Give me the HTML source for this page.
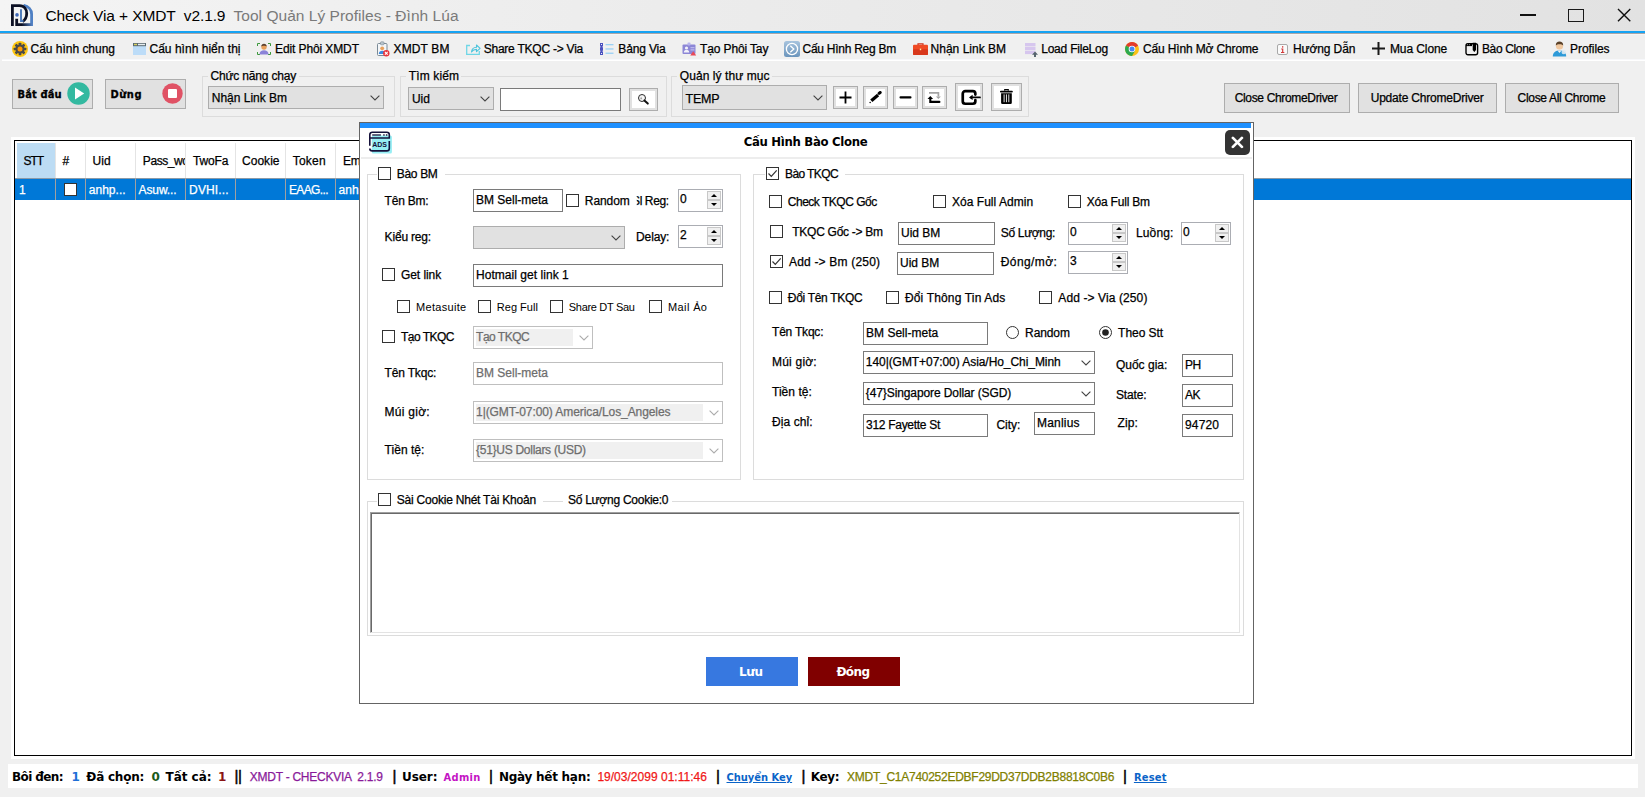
<!DOCTYPE html>
<html lang="vi"><head><meta charset="utf-8"><title>Check Via + XMDT</title>
<style>
html,body{margin:0;padding:0}
body{width:1645px;height:797px;position:relative;overflow:hidden;background:#f0f0f0;font-family:"Liberation Sans",sans-serif;font-size:12px;color:#000}
div,span.t,svg{position:absolute;box-sizing:border-box}
.t{white-space:pre;line-height:16px;-webkit-text-stroke:0.25px}
.btn{background:#e1e1e1;border:1px solid #adadad}
.gb{border:1px solid #dcdcdc}
.in{background:#fff;border:1px solid #7a7a7a}
.cb{background:#fff;border:1px solid #333;width:13px;height:13px}
.cmb{background:#e1e1e1;border:1px solid #adadad}
</style></head>
<body>
<div style="left:0px;top:0px;width:1645px;height:31px;background:linear-gradient(90deg,#f4f4f4 0%,#ececec 40%,#e2e2e2 100%);"></div>
<div style="left:0px;top:31px;width:1645px;height:2px;background:#16a3f3;"></div>
<div style="left:0px;top:33px;width:1645px;height:1px;background:#aca6a6;"></div>
<div style="left:0px;top:34px;width:1645px;height:1px;background:#f6f6f6;"></div>
<svg style="left:11px;top:4px" width="22" height="22" viewBox="0 0 22 22"><defs><linearGradient id="lg" x1="0" x2="1" y1="0" y2="0"><stop offset="0" stop-color="#0c1024"/><stop offset=".3" stop-color="#0c1024"/><stop offset="1" stop-color="#5b8bd0"/></linearGradient></defs><path d="M12.500 1.300C17.500 2.200 20.600 5.800 20.600 10V22" stroke="#4f80c4" stroke-width="2.800" fill="none"/><path d="M5.700 14.700V20.600H22" stroke="url(#lg)" stroke-width="2.800" fill="none"/><path d="M1.400 22V1.600H8.500C13.500 1.600 15.700 5.500 15.700 9.500 15.700 13 14 16 11.500 17.600" stroke="#0c1024" stroke-width="2.800" fill="none"/><path d="M10 5.300V17H12.500" stroke="#4a78b8" stroke-width="1.900" fill="none"/><circle cx="6" cy="10.900" r="1.800" fill="#3f68b8"/></svg>
<span class="t" style="letter-spacing:-0.109px;line-height:19px;left:45.5px;top:6px;font-size:15.5px;-webkit-text-stroke:0;">Check Via + XMDT  v2.1.9</span>
<span class="t" style="letter-spacing:0.032px;line-height:19px;left:233.5px;top:6px;font-size:15.5px;color:#7a7a7a;-webkit-text-stroke:0;">Tool Quản Lý Profiles - Đình Lúa</span>
<div style="left:1520px;top:14px;width:16px;height:2px;background:#111;"></div>
<div style="left:1568px;top:8.5px;width:16px;height:13.5px;border:1.800px solid #1a1a1a;"></div>
<svg style="left:1617px;top:8px" width="14" height="14" viewBox="0 0 14 14"><path d="M1 1L13.300 13.200M13.300 1L1 13.200" stroke="#111" stroke-width="1.400" fill="none"/></svg>
<div style="left:2px;top:59px;width:1643px;height:1px;background:#f7f8fb;"></div>
<div style="left:2px;top:60px;width:1643px;height:1px;background:#fff;"></div>
<span class="t" style="letter-spacing:-0.018px;left:30.5px;top:41px;">Cấu hình chung</span>
<span class="t" style="letter-spacing:0.017px;left:149.5px;top:41px;">Cấu hình hiển thị</span>
<span class="t" style="letter-spacing:-0.105px;left:275.0px;top:41px;">Edit Phôi XMDT</span>
<span class="t" style="letter-spacing:0.146px;left:393.5px;top:41px;">XMDT BM</span>
<span class="t" style="letter-spacing:-0.230px;left:483.7px;top:41px;">Share TKQC -&gt; Via</span>
<span class="t" style="letter-spacing:-0.143px;left:618.3px;top:41px;">Bảng Via</span>
<span class="t" style="letter-spacing:-0.139px;left:700.1px;top:41px;">Tạo Phôi Tay</span>
<span class="t" style="letter-spacing:-0.264px;left:802.5px;top:41px;">Cấu Hình Reg Bm</span>
<span class="t" style="letter-spacing:0.002px;left:930.6px;top:41px;">Nhận Link BM</span>
<span class="t" style="letter-spacing:-0.217px;left:1041.2px;top:41px;">Load FileLog</span>
<span class="t" style="letter-spacing:-0.137px;left:1142.9px;top:41px;">Cấu Hình Mở Chrome</span>
<span class="t" style="letter-spacing:-0.096px;left:1292.9px;top:41px;">Hướng Dẫn</span>
<span class="t" style="letter-spacing:-0.079px;left:1389.9px;top:41px;">Mua Clone</span>
<span class="t" style="letter-spacing:-0.343px;left:1481.9px;top:41px;">Bào Clone</span>
<span class="t" style="letter-spacing:-0.074px;left:1570.1px;top:41px;">Profiles</span>
<svg style="left:12px;top:41px" width="16" height="16" viewBox="0 0 16 16"><circle cx="8" cy="8" r="8" fill="#fdc50f"/><g fill="#4a4a4a"><circle cx="8" cy="8" r="4.600"/><g id="gt"><rect x="6.700" y="1.700" width="2.600" height="12.600" rx=".6"/><rect x="6.700" y="1.700" width="2.600" height="12.600" rx=".6" transform="rotate(45 8 8)"/><rect x="6.700" y="1.700" width="2.600" height="12.600" rx=".6" transform="rotate(90 8 8)"/><rect x="6.700" y="1.700" width="2.600" height="12.600" rx=".6" transform="rotate(135 8 8)"/></g></g><circle cx="8" cy="8" r="2.500" fill="#ff9a00"/></svg>
<svg style="left:133px;top:43px" width="13" height="12" viewBox="0 0 13 12"><rect width="13" height="12" fill="#bcdcf8"/><rect width="13" height="3.200" fill="#5a6a72"/><rect x="1" y=".8" width="3" height="1.400" fill="#d8d060"/><rect x="5" y=".8" width="7" height="1.400" fill="#e8eef0"/></svg>
<svg style="left:257px;top:43px" width="14" height="12" viewBox="0 0 14 12"><path d="M.5 3V.5H3M11 .5h2.500V3M13.500 9v2.500H11M3 11.500H.5V9" fill="none" stroke="#3c9a3c" stroke-width="1"/><circle cx="7" cy="4" r="2.700" fill="#e9a05c"/><path d="M4.300 3.500c0-2 1.200-2.800 2.700-2.800s2.700.8 2.700 2.800c-1 -.9-4.400-.9-5.400 0z" fill="#5a4030"/><path d="M2.500 11.500c0-3 2-4.200 4.500-4.200s4.500 1.200 4.500 4.200z" fill="#8a82d8"/></svg>
<svg style="left:376px;top:41px" width="14" height="16" viewBox="0 0 14 16"><rect x="1.500" y="2.500" width="9.500" height="12" rx="1" fill="#f4f6f8" stroke="#7a8a96" stroke-width="1"/><rect x="4.500" y=".8" width="3.500" height="3" rx=".8" fill="#b8c4cc" stroke="#7a8a96" stroke-width=".6"/><circle cx="6.200" cy="7.300" r="1.900" fill="#e9a05c"/><path d="M2.800 13c0-2.400 1.500-3.300 3.400-3.300s3.400.9 3.400 3.300z" fill="#3a8ae0"/><circle cx="10.300" cy="12.300" r="3.200" fill="#e8323c"/><path d="M8.900 10.900l2.800 2.800M11.700 10.900l-2.800 2.800" stroke="#fff" stroke-width="1.100"/></svg>
<svg style="left:466px;top:43px" width="15" height="12" viewBox="0 0 15 12"><path d="M4 2.500H.7v9h12.600V8" fill="none" stroke="#6fd6e6" stroke-width="1.300"/><path d="M5.500 9c.3-3 2-4.600 5-4.700V2l3.600 3.300-3.600 3.300V6.400c-2.200 0-3.700.7-5 2.600z" fill="none" stroke="#4cc4dc" stroke-width="1.100" stroke-linejoin="round"/></svg>
<svg style="left:600px;top:43px" width="14" height="12" viewBox="0 0 14 12"><g fill="none" stroke="#4a50c0" stroke-width="1"><rect x=".5" y=".5" width="2" height="2.600"/><rect x=".5" y="4.700" width="2" height="2.600"/><rect x=".5" y="8.900" width="2" height="2.600"/></g><rect x="1" y="3" width="1" height="2" fill="#4a50c0"/><rect x="1" y="7.200" width="1" height="2" fill="#4a50c0"/><g fill="#9ad0f4"><rect x="5.500" y="1" width="8" height="1.300"/><rect x="5.500" y="5.300" width="8" height="1.300"/><rect x="5.500" y="9.600" width="8" height="1.300"/></g></svg>
<svg style="left:682px;top:42px" width="15" height="14" viewBox="0 0 15 14"><rect x=".5" y="2.500" width="13" height="9.500" rx="1" fill="#8c86d6"/><rect x="5.500" y=".6" width="3" height="3" rx=".8" fill="#b8b4ec"/><circle cx="4.500" cy="6" r="1.600" fill="#f2f2fa"/><path d="M1.800 10.500c0-1.800 1.200-2.400 2.700-2.400s2.700.6 2.700 2.400z" fill="#f2f2fa"/><rect x="8.500" y="5.200" width="4" height="1" fill="#c8c4f2"/><rect x="8.500" y="7.400" width="4" height="1" fill="#c8c4f2"/><path d="M11.200 9.200l3 4.300h-6z" fill="#e84858"/></svg>
<svg style="left:784px;top:41px" width="16" height="16" viewBox="0 0 16 16"><defs><linearGradient id="rg" x1="0" y1="0" x2="0" y2="1"><stop offset="0" stop-color="#a8c4de"/><stop offset="1" stop-color="#6a94bc"/></linearGradient></defs><rect width="16" height="16" rx="2.500" fill="url(#rg)"/><circle cx="8" cy="8" r="5.600" fill="none" stroke="#fff" stroke-width="1.300"/><path d="M6.300 4.800L9.800 8l-3.500 3.200" fill="none" stroke="#fff" stroke-width="1.300"/></svg>
<svg style="left:913px;top:43px" width="15" height="12" viewBox="0 0 15 12"><path d="M5 2V.8h5V2" fill="none" stroke="#d0301a" stroke-width="1.200"/><rect y="1.800" width="15" height="10.200" rx="1" fill="#f04a24"/><rect y="6.300" width="15" height="5.700" rx="1" fill="#d8381c"/><rect x="6.800" y="5.600" width="1.400" height="1.600" fill="#ffe9a0"/></svg>
<svg style="left:1025px;top:43px" width="13" height="14" viewBox="0 0 13 14"><g fill="#d6c6ee"><rect width="10.500" height="3.300"/><rect y="3.900" width="10.500" height="3.300"/><rect y="7.800" width="10.500" height="3.300"/></g><path d="M10 8.600l3 3.200h-2V14H9v-2.200H7z" fill="#56646e"/></svg>
<svg style="left:1125px;top:42px" width="14" height="14" viewBox="0 0 14 14"><circle cx="7" cy="7" r="7" fill="#fbc116"/><path d="M7 7L.94 3.500A7 7 0 0 1 13.060 3.500z" fill="#e33b2e"/><path d="M7 7L.94 3.500A7 7 0 0 0 7 14l3.030-5.250z" fill="#2da94f"/><path d="M7 7h6.800" stroke="#fbc116" stroke-width="0"/><path d="M13.060 3.500H7v3.500z" fill="#e33b2e"/><circle cx="7" cy="7" r="3.300" fill="#fff"/><circle cx="7" cy="7" r="2.500" fill="#4688f4"/></svg>
<svg style="left:1277px;top:44px" width="11" height="11" viewBox="0 0 11 11"><rect x=".5" y=".5" width="10" height="10" rx="1.500" fill="#fafafa" stroke="#a8a8a8" stroke-width="1"/><rect x="5" y="2.200" width="1.300" height="1.400" fill="#d23838"/><path d="M4.200 4.600h2.100v3.300h1v1h-3.300v-1h1.100v-2.300h-.9z" fill="#d23838"/></svg>
<svg style="left:1372px;top:42px" width="13" height="13" viewBox="0 0 13 13"><path d="M6.500 0v13M0 6.500h13" stroke="#1a1a1a" stroke-width="2"/></svg>
<svg style="left:1464.500px;top:41.500px" width="14" height="14" viewBox="0 0 14 14"><rect x="1" y="1.800" width="11.600" height="11" rx="2" fill="none" stroke="#000" stroke-width="1.400"/><rect x="1" y="1.800" width="6" height="2.300" fill="#000"/><circle cx="2.400" cy="2.800" r=".45" fill="#fff"/><circle cx="4.300" cy="2.800" r=".45" fill="#fff"/><path d="M7.700 .8h3.300v7.300l-1.650 2-1.650-2z" fill="#000"/></svg>
<svg style="left:1552px;top:41px" width="16" height="16" viewBox="0 0 16 16"><circle cx="7.500" cy="5" r="3.600" fill="#f0c8a0"/><path d="M3.800 4.400C3.600 1.600 5.400.4 7.500.4s3.900 1.200 3.700 4c-1.400-1.600-6-1.600-7.400 0z" fill="#5a4028"/><path d="M.8 15.500c0-4.300 3-6 6.700-6s6.700 1.700 6.700 6z" fill="#2e9ad8"/><path d="M5.500 9.600l2 2.400 2-2.400z" fill="#f4f4f4"/><circle cx="11.800" cy="11" r="2.300" fill="#dfeaf2" opacity=".9"/></svg>
<div class="btn" style="left:12px;top:79px;width:81px;height:30px;"></div>
<span class="t" style="letter-spacing:0.133px;font-family:'DejaVu Sans Condensed', 'Liberation Sans', sans-serif;line-height:15px;left:17.5px;top:87px;font-size:11px;font-weight:700;-webkit-text-stroke:0.3px;">Bắt đầu</span>
<svg style="left:67px;top:82px" width="23" height="23" viewBox="0 0 23 23"><circle cx="11.500" cy="11.500" r="11.200" fill="#33b9a0"/><path d="M8 5.500L17.200 11.500 8 17.500z" fill="#fff"/></svg>
<div class="btn" style="left:105px;top:79px;width:81px;height:30px;"></div>
<span class="t" style="letter-spacing:0.531px;font-family:'DejaVu Sans Condensed', 'Liberation Sans', sans-serif;line-height:15px;left:110.5px;top:87px;font-size:11px;font-weight:700;-webkit-text-stroke:0.3px;">Dừng</span>
<svg style="left:162px;top:83px" width="21" height="21" viewBox="0 0 21 21"><circle cx="10.500" cy="10.500" r="10.200" fill="#e05265"/><rect x="6" y="6" width="9" height="9" rx="1" fill="#fff"/></svg>
<div style="left:202px;top:76px;width:193px;height:41px;border:1px solid #dcdcdc;"></div>
<div style="left:208px;top:75px;width:90.7px;height:3px;background:#f0f0f0;"></div>
<span class="t" style="letter-spacing:-0.184px;left:210.5px;top:68px;">Chức năng chạy</span>
<div class="cmb" style="left:208px;top:86px;width:176px;height:23px;"></div>
<span class="t" style="letter-spacing:-0.007px;left:211.8px;top:90px;">Nhận Link Bm</span>
<svg style="left:369.6px;top:95px" width="10" height="6" viewBox="0 0 10 6"><path d="M.6 .6L5 5 9.400 .6" fill="none" stroke="#444" stroke-width="1.100"/></svg>
<div style="left:400px;top:76px;width:267px;height:41px;border:1px solid #dcdcdc;"></div>
<div style="left:406.3px;top:75px;width:55.2px;height:3px;background:#f0f0f0;"></div>
<span class="t" style="letter-spacing:0.122px;left:408.8px;top:68px;">Tìm kiếm</span>
<div class="cmb" style="left:408px;top:87px;width:86px;height:23px;"></div>
<span class="t" style="letter-spacing:-0.008px;left:411.9px;top:91px;">Uid</span>
<svg style="left:479.5px;top:96px" width="10" height="6" viewBox="0 0 10 6"><path d="M.6 .6L5 5 9.400 .6" fill="none" stroke="#444" stroke-width="1.100"/></svg>
<div class="in" style="left:500px;top:88px;width:121px;height:23px;"></div>
<div style="left:629px;top:88px;width:29px;height:23px;background:#e1e1e1;border:1px solid #adadad;"></div>
<div style="left:632px;top:91px;width:23px;height:17px;background:#fff;"></div>
<svg style="left:637px;top:93px" width="13" height="13" viewBox="0 0 13 13"><circle cx="5" cy="5" r="3.500" fill="#f6f6f6" stroke="#2a2a2a" stroke-width="1"/><path d="M4 3.600L3.200 6.200 5.400 6.300z" fill="#999"/><path d="M7.400 7.400L10.800 10.600" stroke="#111" stroke-width="2" stroke-linecap="round"/></svg>
<div style="left:671px;top:76px;width:358px;height:41px;border:1px solid #dcdcdc;"></div>
<div style="left:677.3px;top:75px;width:94.7px;height:3px;background:#f0f0f0;"></div>
<span class="t" style="letter-spacing:0.069px;left:679.8px;top:68px;">Quản lý thư mục</span>
<div class="cmb" style="left:682px;top:85px;width:145px;height:25px;"></div>
<span class="t" style="letter-spacing:-0.178px;left:685.5px;top:91px;font-size:12.5px;">TEMP</span>
<svg style="left:813px;top:95px" width="10" height="6" viewBox="0 0 10 6"><path d="M.6 .6L5 5 9.400 .6" fill="none" stroke="#444" stroke-width="1.100"/></svg>
<div style="left:833px;top:86px;width:25px;height:23px;background:#e1e1e1;border:1px solid #adadad;"></div>
<div style="left:836px;top:89px;width:19px;height:17px;background:#fff;"></div>
<svg style="left:839px;top:91px" width="13" height="13" viewBox="0 0 13 13"><path d="M6.500 0.500v12M.5 6.500h12" stroke="#000" stroke-width="1.800"/></svg>
<div style="left:863px;top:86px;width:25px;height:23px;background:#e1e1e1;border:1px solid #adadad;"></div>
<div style="left:866px;top:89px;width:19px;height:17px;background:#fff;"></div>
<svg style="left:869px;top:91px" width="13" height="13" viewBox="0 0 13 13"><path d="M2.300 9.700L9.100 4" stroke="#000" stroke-width="3.300"/><path d="M10.100 2.400L11.200 1.500" stroke="#000" stroke-width="3" stroke-linecap="round"/><circle cx="1.100" cy="11.600" r=".75" fill="#000"/></svg>
<div style="left:893px;top:86px;width:25px;height:23px;background:#e1e1e1;border:1px solid #adadad;"></div>
<div style="left:896px;top:89px;width:19px;height:17px;background:#fff;"></div>
<svg style="left:899px;top:96px" width="13" height="3" viewBox="0 0 13 3"><rect x=".5" y=".3" width="12" height="2.200" rx="1" fill="#000"/></svg>
<div style="left:922px;top:86px;width:25px;height:23px;background:#e1e1e1;border:1px solid #adadad;"></div>
<div style="left:925px;top:89px;width:19px;height:17px;background:#fff;"></div>
<svg style="left:927px;top:91px" width="15" height="13" viewBox="0 0 15 13"><path d="M2 1.950H11.400V5.600" fill="none" stroke="#a4a4a4" stroke-width="1.700"/><path d="M8.900 5.400h5l-2.500 2.700z" fill="#a4a4a4"/><path d="M3.300 7.600V10.900H12.400" fill="none" stroke="#000" stroke-width="2.100" stroke-linecap="round"/><path d="M.5 7.900h5.600L3.300 4.900z" fill="#000"/></svg>
<div style="left:955px;top:83px;width:28px;height:28px;background:#e1e1e1;border:1px solid #adadad;"></div>
<div style="left:958px;top:86px;width:22px;height:22px;background:#fff;"></div>
<svg style="left:960px;top:88px" width="21" height="18" viewBox="0 0 21 18"><path d="M15.350 6.600V5.650a2.500 2.500 0 0 0-2.500-2.500H5.250a2.500 2.500 0 0 0-2.500 2.500V13.250a2.500 2.500 0 0 0 2.500 2.500H12.850a2.500 2.500 0 0 0 2.500-2.500V12.200" fill="none" stroke="#000" stroke-width="2.700" stroke-linecap="round"/><path d="M20 9.400H11" stroke="#000" stroke-width="1.700" stroke-linecap="round"/><path d="M12.600 6.700L9 9.400l3.600 2.700z" fill="#000"/></svg>
<div style="left:991px;top:83px;width:31px;height:28px;background:#e1e1e1;border:1px solid #adadad;"></div>
<div style="left:994px;top:86px;width:25px;height:22px;background:#fff;"></div>
<svg style="left:1000px;top:89px" width="13" height="16" viewBox="0 0 13 16"><path d="M4.700 1.800V.6h3.600V1.800" fill="none" stroke="#000" stroke-width="1.100"/><rect x="0" y="1.700" width="12.800" height="1.900" rx=".8" fill="#000"/><path d="M1.100 4.300h10.700v9.400a1.300 1.300 0 0 1-1.300 1.300H2.400a1.300 1.300 0 0 1-1.300-1.300z" fill="#000"/><path d="M4.100 5.400v7.800M6.450 5.400v7.800M8.800 5.400v7.800" stroke="#fff" stroke-width=".9"/></svg>
<div class="btn" style="left:1224px;top:83px;width:126px;height:30px;"></div>
<span class="t" style="letter-spacing:-0.335px;left:1234.7px;top:90px;">Close ChromeDriver</span>
<div class="btn" style="left:1358px;top:83px;width:139px;height:30px;"></div>
<span class="t" style="letter-spacing:-0.207px;left:1370.7px;top:90px;">Update ChromeDriver</span>
<div class="btn" style="left:1505px;top:83px;width:114px;height:30px;"></div>
<span class="t" style="letter-spacing:-0.314px;left:1517.6px;top:90px;">Close All Chrome</span>
<div style="left:11px;top:137px;width:1624px;height:622px;background:#fff;"></div>
<div style="left:14px;top:140px;width:1618px;height:616px;border:1px solid #000;background:#fff;"></div>
<div style="left:17px;top:143px;width:39px;height:35px;background:#bcdcf4;"></div>
<div style="left:55px;top:143px;width:1px;height:35px;background:#e4e4e4;"></div>
<div style="left:85px;top:143px;width:1px;height:35px;background:#e4e4e4;"></div>
<div style="left:135px;top:143px;width:1px;height:35px;background:#e4e4e4;"></div>
<div style="left:185px;top:143px;width:1px;height:35px;background:#e4e4e4;"></div>
<div style="left:235px;top:143px;width:1px;height:35px;background:#e4e4e4;"></div>
<div style="left:285px;top:143px;width:1px;height:35px;background:#e4e4e4;"></div>
<div style="left:335px;top:143px;width:1px;height:35px;background:#e4e4e4;"></div>
<span class="t" style="letter-spacing:-1.036px;left:23.6px;top:153px;">STT</span>
<span class="t" style="left:62.5px;top:153px;">#</span>
<span class="t" style="letter-spacing:-0.008px;left:92.6px;top:153px;">Uid</span>
<span class="t" style="letter-spacing:-0.422px;left:142.8px;top:153px;max-width:42.200px;overflow:hidden;">Pass_word</span>
<span class="t" style="letter-spacing:-0.129px;left:192.9px;top:153px;">TwoFa</span>
<span class="t" style="letter-spacing:0.028px;left:242.0px;top:153px;">Cookie</span>
<span class="t" style="letter-spacing:0.242px;left:292.7px;top:153px;">Token</span>
<span class="t" style="letter-spacing:-0.254px;left:342.9px;top:153px;">Email</span>
<div style="left:15px;top:178px;width:1616px;height:22px;background:#0078d7;"></div>
<div style="left:15px;top:178px;width:1616px;height:1px;background:#8a9aa8;"></div>
<div style="left:55px;top:178px;width:1px;height:22px;background:#a0a0a0;"></div>
<div style="left:85px;top:178px;width:1px;height:22px;background:#a0a0a0;"></div>
<div style="left:135px;top:178px;width:1px;height:22px;background:#a0a0a0;"></div>
<div style="left:185px;top:178px;width:1px;height:22px;background:#a0a0a0;"></div>
<div style="left:235px;top:178px;width:1px;height:22px;background:#a0a0a0;"></div>
<div style="left:285px;top:178px;width:1px;height:22px;background:#a0a0a0;"></div>
<div style="left:335px;top:178px;width:1px;height:22px;background:#a0a0a0;"></div>
<span class="t" style="left:19.1px;top:182px;color:#fff;">1</span>
<div style="left:64px;top:183px;width:13px;height:13px;background:#fff;border:1px solid #333;"></div>
<span class="t" style="letter-spacing:0.049px;left:88.7px;top:182px;color:#fff;">anhp...</span>
<span class="t" style="letter-spacing:-0.115px;left:138.6px;top:182px;color:#fff;">Asuw...</span>
<span class="t" style="letter-spacing:0.138px;left:189.1px;top:182px;color:#fff;">DVHI...</span>
<span class="t" style="letter-spacing:-0.593px;left:288.9px;top:182px;color:#fff;">EAAG...</span>
<span class="t" style="letter-spacing:0.049px;left:338.5px;top:182px;color:#fff;">anhp...</span>
<div style="left:8px;top:764px;width:1630px;height:24px;background:#fff;"></div>
<span class="t" style="letter-spacing:-0.609px;font-family:'DejaVu Sans', 'Liberation Sans', sans-serif;left:12.0px;top:769px;font-weight:700;-webkit-text-stroke:0;">Bôi đen:</span>
<span class="t" style="font-family:'DejaVu Sans', 'Liberation Sans', sans-serif;left:71.5px;top:769px;font-weight:700;color:#1e6fd6;-webkit-text-stroke:0;">1</span>
<span class="t" style="letter-spacing:-0.225px;font-family:'DejaVu Sans', 'Liberation Sans', sans-serif;left:86.3px;top:769px;font-weight:700;-webkit-text-stroke:0;">Đã chọn:</span>
<span class="t" style="font-family:'DejaVu Sans', 'Liberation Sans', sans-serif;left:151.4px;top:769px;font-weight:700;color:#1a5a1a;-webkit-text-stroke:0;">0</span>
<span class="t" style="letter-spacing:-0.036px;font-family:'DejaVu Sans', 'Liberation Sans', sans-serif;left:165.5px;top:769px;font-weight:700;-webkit-text-stroke:0;">Tất cả:</span>
<span class="t" style="font-family:'DejaVu Sans', 'Liberation Sans', sans-serif;left:218.0px;top:769px;font-weight:700;color:#8a1414;-webkit-text-stroke:0;">1</span>
<span class="t" style="letter-spacing:-0.297px;line-height:19px;left:234.5px;top:766px;font-size:15px;-webkit-text-stroke:0.5px;">||</span>
<span class="t" style="letter-spacing:-0.257px;left:249.8px;top:769px;color:#8a1a9a;">XMDT - CHECKVIA  2.1.9</span>
<span class="t" style="line-height:19px;left:392.5px;top:766px;font-size:15px;-webkit-text-stroke:0.5px;">|</span>
<span class="t" style="letter-spacing:-0.088px;font-family:'DejaVu Sans', 'Liberation Sans', sans-serif;left:402.1px;top:769px;font-weight:700;-webkit-text-stroke:0;">User:</span>
<span class="t" style="letter-spacing:0.325px;font-family:'DejaVu Sans Condensed', 'Liberation Sans', sans-serif;line-height:15px;left:443.5px;top:770px;font-size:11px;font-weight:700;color:#c414c4;-webkit-text-stroke:0;">Admin</span>
<span class="t" style="line-height:19px;left:488.9px;top:766px;font-size:15px;-webkit-text-stroke:0.5px;">|</span>
<span class="t" style="letter-spacing:-0.263px;font-family:'DejaVu Sans', 'Liberation Sans', sans-serif;left:499.0px;top:769px;font-weight:700;-webkit-text-stroke:0;">Ngày hết hạn:</span>
<span class="t" style="letter-spacing:0.016px;left:597.4px;top:769px;color:#f01818;">19/03/2099 01:11:46</span>
<span class="t" style="line-height:19px;left:715.9px;top:766px;font-size:15px;-webkit-text-stroke:0.5px;">|</span>
<span class="t" style="letter-spacing:-0.006px;font-family:'DejaVu Sans Condensed', 'Liberation Sans', sans-serif;line-height:15px;left:726.5px;top:770px;font-size:11px;font-weight:700;color:#0a64c8;text-decoration:underline;-webkit-text-stroke:0;">Chuyển Key</span>
<span class="t" style="line-height:19px;left:801.5px;top:766px;font-size:15px;-webkit-text-stroke:0.5px;">|</span>
<span class="t" style="letter-spacing:-0.386px;font-family:'DejaVu Sans', 'Liberation Sans', sans-serif;left:810.8px;top:769px;font-weight:700;-webkit-text-stroke:0;">Key:</span>
<span class="t" style="letter-spacing:-0.265px;left:847.1px;top:769px;color:#808000;">XMDT_C1A740252EDBF29DD37DDB2B8818C0B6</span>
<span class="t" style="line-height:19px;left:1122.9px;top:766px;font-size:15px;-webkit-text-stroke:0.5px;">|</span>
<span class="t" style="letter-spacing:0.228px;font-family:'DejaVu Sans Condensed', 'Liberation Sans', sans-serif;line-height:15px;left:1133.9px;top:770px;font-size:11px;font-weight:700;color:#0a64c8;text-decoration:underline;-webkit-text-stroke:0;">Reset</span>
<div style="left:359px;top:122px;width:895px;height:582px;background:#fff;border:1px solid #646464;"></div>
<div style="left:360px;top:123px;width:891px;height:5px;background:#1e90ff;"></div>
<div style="left:361px;top:157px;width:891px;height:2px;background:#ededed;"></div>
<svg style="left:369px;top:131px" width="24" height="23" viewBox="0 0 24 23"><rect x="2.800" y="4.600" width="20.100" height="17.900" rx="1.500" fill="#96eef4"/><path d="M.8 14.700V3.700a2.500 2.500 0 0 1 2.500-2.500H17.800a2.500 2.500 0 0 1 2.500 2.500V7H.8" fill="none" stroke="#14103a" stroke-width="1.600"/><path d="M20.300 10V17.400a2.500 2.500 0 0 1-2.500 2.500H3.300a2.500 2.500 0 0 1-2.500-2.500" fill="none" stroke="#14103a" stroke-width="1.600"/><path d="M3.200 4H11.900" stroke="#14103a" stroke-width="1.300"/><rect x="14.200" y="3.300" width="1.500" height="1.400" fill="#14103a"/><rect x="16.900" y="3.300" width="1.500" height="1.400" fill="#14103a"/><text x="3.200" y="15.900" font-family="Liberation Sans, sans-serif" font-weight="700" font-size="6.800" fill="#14103a" textLength="14.700" lengthAdjust="spacingAndGlyphs">ADS</text></svg>
<span class="t" style="letter-spacing:-0.305px;font-family:'DejaVu Sans Condensed', 'Liberation Sans', sans-serif;line-height:17px;left:743.7px;top:133px;font-size:13px;font-weight:700;-webkit-text-stroke:0;">Cấu Hình Bào Clone</span>
<div style="left:1225px;top:130px;width:25px;height:25px;background:#333;border-radius:5px;"></div>
<svg style="left:1231px;top:136px" width="13" height="13" viewBox="0 0 13 13"><path d="M1.900 1.900l9 9M10.900 1.900l-9 9" stroke="#fff" stroke-width="2.700" stroke-linecap="round"/></svg>
<div style="left:367px;top:174px;width:374px;height:306px;border:1px solid #dcdcdc;"></div>
<div style="left:377px;top:173px;width:68px;height:3px;background:#fff;"></div>
<div style="left:378px;top:167px;width:13px;height:13px;background:#fff;border:1px solid #333;"></div>
<span class="t" style="letter-spacing:-0.338px;left:396.8px;top:166px;">Bào BM</span>
<span class="t" style="letter-spacing:-0.227px;left:384.6px;top:193px;">Tên Bm:</span>
<div style="left:473px;top:189px;width:90px;height:23px;background:#fff;border:1px solid #7a7a7a;"></div>
<span class="t" style="letter-spacing:-0.003px;left:476.0px;top:192px;">BM Sell-meta</span>
<div style="left:566px;top:194px;width:13px;height:13px;background:#fff;border:1px solid #333;"></div>
<span class="t" style="letter-spacing:-0.072px;left:584.8px;top:193px;">Random</span>
<span class="t" style="letter-spacing:-0.377px;left:632.0px;top:193px;clip-path:inset(0 0 0 4.800px);">Sl Reg:</span>
<div style="left:678px;top:189px;width:45px;height:23px;background:#fff;border:1px solid #abadb3;"></div>
<span class="t" style="left:679.9px;top:191px;">0</span>
<div style="left:707px;top:191px;width:14px;height:9px;background:#f0f0f0;border:1px solid #c8c8c8;"></div>
<div style="left:707px;top:200px;width:14px;height:9px;background:#f0f0f0;border:1px solid #c8c8c8;"></div>
<svg style="left:711px;top:194px" width="6" height="3" viewBox="0 0 6 3"><path d="M0 3L3 0l3 3z" fill="#000"/></svg>
<svg style="left:711px;top:203px" width="6" height="3" viewBox="0 0 6 3"><path d="M0 0l3 3 3-3z" fill="#000"/></svg>
<span class="t" style="letter-spacing:-0.179px;left:384.6px;top:229px;">Kiểu reg:</span>
<div class="cmb" style="left:473px;top:226px;width:152px;height:23px;"></div>
<svg style="left:610.8px;top:235px" width="10" height="6" viewBox="0 0 10 6"><path d="M.6 .6L5 5 9.400 .6" fill="none" stroke="#444" stroke-width="1.100"/></svg>
<span class="t" style="letter-spacing:-0.143px;left:636.1px;top:229px;">Delay:</span>
<div style="left:678px;top:225px;width:45px;height:23px;background:#fff;border:1px solid #abadb3;"></div>
<span class="t" style="left:679.9px;top:227px;">2</span>
<div style="left:707px;top:227px;width:14px;height:9px;background:#f0f0f0;border:1px solid #c8c8c8;"></div>
<div style="left:707px;top:236px;width:14px;height:9px;background:#f0f0f0;border:1px solid #c8c8c8;"></div>
<svg style="left:711px;top:230px" width="6" height="3" viewBox="0 0 6 3"><path d="M0 3L3 0l3 3z" fill="#000"/></svg>
<svg style="left:711px;top:239px" width="6" height="3" viewBox="0 0 6 3"><path d="M0 0l3 3 3-3z" fill="#000"/></svg>
<div style="left:382px;top:268px;width:13px;height:13px;background:#fff;border:1px solid #333;"></div>
<span class="t" style="letter-spacing:-0.070px;left:401.0px;top:267px;">Get link</span>
<div style="left:473px;top:264px;width:250px;height:23px;background:#fff;border:1px solid #7a7a7a;"></div>
<span class="t" style="letter-spacing:0.044px;left:476.0px;top:267px;">Hotmail get link 1</span>
<div style="left:397px;top:300px;width:13px;height:13px;background:#fff;border:1px solid #333;"></div>
<span class="t" style="letter-spacing:0.312px;line-height:14px;left:416.0px;top:300px;font-size:11px;-webkit-text-stroke:0;">Metasuite</span>
<div style="left:478px;top:300px;width:13px;height:13px;background:#fff;border:1px solid #333;"></div>
<span class="t" style="letter-spacing:0.019px;line-height:14px;left:496.8px;top:300px;font-size:11px;-webkit-text-stroke:0;">Reg Full</span>
<div style="left:550px;top:300px;width:13px;height:13px;background:#fff;border:1px solid #333;"></div>
<span class="t" style="letter-spacing:-0.311px;line-height:14px;left:568.8px;top:300px;font-size:11px;-webkit-text-stroke:0;">Share DT Sau</span>
<div style="left:649px;top:300px;width:13px;height:13px;background:#fff;border:1px solid #333;"></div>
<span class="t" style="letter-spacing:0.385px;line-height:14px;left:668.0px;top:300px;font-size:11px;-webkit-text-stroke:0;">Mail Ảo</span>
<div style="left:382px;top:330px;width:13px;height:13px;background:#fff;border:1px solid #333;"></div>
<span class="t" style="letter-spacing:-0.520px;left:401.0px;top:329px;">Tạo TKQC</span>
<div style="left:473px;top:326px;width:120px;height:23px;background:#fff;border:1px solid #bfbfbf;"></div>
<div style="left:476px;top:329px;width:97px;height:17px;background:#f0f0f0;"></div>
<span class="t" style="letter-spacing:-0.506px;left:476.1px;top:329px;color:#6d6d6d;">Tạo TKQC</span>
<svg style="left:578.8px;top:335.3px" width="10" height="6" viewBox="0 0 10 6"><path d="M.6 .6L5 5 9.400 .6" fill="none" stroke="#acacac" stroke-width="1.100"/></svg>
<span class="t" style="letter-spacing:-0.180px;left:384.6px;top:365px;">Tên Tkqc:</span>
<div style="left:473px;top:362px;width:250px;height:23px;background:#fff;border:1px solid #bfbfbf;"></div>
<span class="t" style="letter-spacing:-0.003px;left:476.0px;top:365px;color:#6d6d6d;">BM Sell-meta</span>
<span class="t" style="letter-spacing:0.269px;left:384.6px;top:404px;">Múi giờ:</span>
<div style="left:473px;top:401px;width:250px;height:23px;background:#fff;border:1px solid #bfbfbf;"></div>
<div style="left:476px;top:404px;width:227px;height:17px;background:#f0f0f0;"></div>
<span class="t" style="letter-spacing:-0.088px;left:476.1px;top:404px;color:#6d6d6d;">1|(GMT-07:00) America/Los_Angeles</span>
<svg style="left:708.8px;top:410.3px" width="10" height="6" viewBox="0 0 10 6"><path d="M.6 .6L5 5 9.400 .6" fill="none" stroke="#acacac" stroke-width="1.100"/></svg>
<span class="t" style="letter-spacing:0.032px;left:384.6px;top:442px;">Tiền tệ:</span>
<div style="left:473px;top:439px;width:250px;height:23px;background:#fff;border:1px solid #bfbfbf;"></div>
<div style="left:476px;top:442px;width:227px;height:17px;background:#f0f0f0;"></div>
<span class="t" style="letter-spacing:-0.283px;left:476.1px;top:442px;color:#6d6d6d;">{51}US Dollars (USD)</span>
<svg style="left:708.8px;top:448.3px" width="10" height="6" viewBox="0 0 10 6"><path d="M.6 .6L5 5 9.400 .6" fill="none" stroke="#acacac" stroke-width="1.100"/></svg>
<div style="left:753px;top:174px;width:491px;height:306px;border:1px solid #dcdcdc;"></div>
<div style="left:765px;top:173px;width:80px;height:3px;background:#fff;"></div>
<div style="left:766px;top:167px;width:13px;height:13px;background:#fff;border:1px solid #333;"></div>
<svg style="left:767px;top:168px" width="11" height="11" viewBox="0 0 11 11"><path d="M1.500 5.500L4.300 8.300 9.700 2.400" fill="none" stroke="#333" stroke-width="1.200"/></svg>
<span class="t" style="letter-spacing:-0.616px;left:785.1px;top:166px;">Bào TKQC</span>
<div style="left:769px;top:195px;width:13px;height:13px;background:#fff;border:1px solid #333;"></div>
<span class="t" style="letter-spacing:-0.493px;left:787.8px;top:194px;">Check TKQC Gốc</span>
<div style="left:933px;top:195px;width:13px;height:13px;background:#fff;border:1px solid #333;"></div>
<span class="t" style="letter-spacing:0.045px;left:951.9px;top:194px;">Xóa Full Admin</span>
<div style="left:1068px;top:195px;width:13px;height:13px;background:#fff;border:1px solid #333;"></div>
<span class="t" style="letter-spacing:-0.196px;left:1086.7px;top:194px;">Xóa Full Bm</span>
<div style="left:770px;top:225px;width:13px;height:13px;background:#fff;border:1px solid #333;"></div>
<span class="t" style="letter-spacing:-0.274px;left:792.3px;top:224px;">TKQC Gốc -&gt; Bm</span>
<div style="left:898px;top:222px;width:97px;height:23px;background:#fff;border:1px solid #7a7a7a;"></div>
<span class="t" style="letter-spacing:-0.009px;left:901.0px;top:225px;">Uid BM</span>
<span class="t" style="letter-spacing:-0.335px;left:1000.8px;top:225px;">Số Lượng:</span>
<div style="left:1068px;top:222px;width:60px;height:23px;background:#fff;border:1px solid #abadb3;"></div>
<span class="t" style="left:1069.9px;top:224px;">0</span>
<div style="left:1112px;top:224px;width:14px;height:9px;background:#f0f0f0;border:1px solid #c8c8c8;"></div>
<div style="left:1112px;top:233px;width:14px;height:9px;background:#f0f0f0;border:1px solid #c8c8c8;"></div>
<svg style="left:1116px;top:227px" width="6" height="3" viewBox="0 0 6 3"><path d="M0 3L3 0l3 3z" fill="#000"/></svg>
<svg style="left:1116px;top:236px" width="6" height="3" viewBox="0 0 6 3"><path d="M0 0l3 3 3-3z" fill="#000"/></svg>
<span class="t" style="letter-spacing:0.119px;left:1136.0px;top:225px;">Luồng:</span>
<div style="left:1181px;top:222px;width:50px;height:23px;background:#fff;border:1px solid #abadb3;"></div>
<span class="t" style="left:1182.9px;top:224px;">0</span>
<div style="left:1215px;top:224px;width:14px;height:9px;background:#f0f0f0;border:1px solid #c8c8c8;"></div>
<div style="left:1215px;top:233px;width:14px;height:9px;background:#f0f0f0;border:1px solid #c8c8c8;"></div>
<svg style="left:1219px;top:227px" width="6" height="3" viewBox="0 0 6 3"><path d="M0 3L3 0l3 3z" fill="#000"/></svg>
<svg style="left:1219px;top:236px" width="6" height="3" viewBox="0 0 6 3"><path d="M0 0l3 3 3-3z" fill="#000"/></svg>
<div style="left:770px;top:255px;width:13px;height:13px;background:#fff;border:1px solid #333;"></div>
<svg style="left:771px;top:256px" width="11" height="11" viewBox="0 0 11 11"><path d="M1.500 5.500L4.300 8.300 9.700 2.400" fill="none" stroke="#333" stroke-width="1.200"/></svg>
<span class="t" style="letter-spacing:0.188px;left:789.0px;top:254px;">Add -&gt; Bm (250)</span>
<div style="left:897px;top:252px;width:97px;height:23px;background:#fff;border:1px solid #7a7a7a;"></div>
<span class="t" style="letter-spacing:-0.009px;left:900.0px;top:255px;">Uid BM</span>
<span class="t" style="letter-spacing:0.395px;left:1000.8px;top:254px;">Đóng/mở:</span>
<div style="left:1068px;top:251px;width:60px;height:23px;background:#fff;border:1px solid #abadb3;"></div>
<span class="t" style="left:1069.9px;top:253px;">3</span>
<div style="left:1112px;top:253px;width:14px;height:9px;background:#f0f0f0;border:1px solid #c8c8c8;"></div>
<div style="left:1112px;top:262px;width:14px;height:9px;background:#f0f0f0;border:1px solid #c8c8c8;"></div>
<svg style="left:1116px;top:256px" width="6" height="3" viewBox="0 0 6 3"><path d="M0 3L3 0l3 3z" fill="#000"/></svg>
<svg style="left:1116px;top:265px" width="6" height="3" viewBox="0 0 6 3"><path d="M0 0l3 3 3-3z" fill="#000"/></svg>
<div style="left:769px;top:291px;width:13px;height:13px;background:#fff;border:1px solid #333;"></div>
<span class="t" style="letter-spacing:-0.315px;left:787.8px;top:290px;">Đổi Tên TKQC</span>
<div style="left:886px;top:291px;width:13px;height:13px;background:#fff;border:1px solid #333;"></div>
<span class="t" style="letter-spacing:0.160px;left:904.9px;top:290px;">Đổi Thông Tin Ads</span>
<div style="left:1039px;top:291px;width:13px;height:13px;background:#fff;border:1px solid #333;"></div>
<span class="t" style="letter-spacing:0.107px;left:1058.3px;top:290px;">Add -&gt; Via (250)</span>
<span class="t" style="letter-spacing:-0.205px;left:772.0px;top:324px;">Tên Tkqc:</span>
<div style="left:863px;top:322px;width:125px;height:23px;background:#fff;border:1px solid #7a7a7a;"></div>
<span class="t" style="letter-spacing:0.015px;left:866.0px;top:325px;">BM Sell-meta</span>
<svg style="left:1004.8px;top:325.3px" width="15" height="15" viewBox="0 0 15 15"><circle cx="7.500" cy="7.500" r="6" fill="#fff" stroke="#333" stroke-width="1"/></svg>
<span class="t" style="letter-spacing:-0.112px;left:1025.1px;top:325px;">Random</span>
<svg style="left:1097.8px;top:325.3px" width="15" height="15" viewBox="0 0 15 15"><circle cx="7.500" cy="7.500" r="6" fill="#fff" stroke="#333" stroke-width="1"/><circle cx="7.500" cy="7.500" r="3.300" fill="#222"/></svg>
<span class="t" style="letter-spacing:-0.037px;left:1118.1px;top:325px;">Theo Stt</span>
<span class="t" style="letter-spacing:0.212px;left:772.0px;top:354px;">Múi giờ:</span>
<div class="in" style="left:863px;top:351px;width:232px;height:23px;"></div>
<span class="t" style="letter-spacing:-0.064px;left:865.8px;top:354px;">140|(GMT+07:00) Asia/Ho_Chi_Minh</span>
<svg style="left:1080.8px;top:360px" width="10" height="6" viewBox="0 0 10 6"><path d="M.6 .6L5 5 9.400 .6" fill="none" stroke="#444" stroke-width="1.100"/></svg>
<span class="t" style="letter-spacing:0.016px;left:1115.9px;top:357px;">Quốc gia:</span>
<div style="left:1182px;top:354px;width:51px;height:23px;background:#fff;border:1px solid #7a7a7a;"></div>
<span class="t" style="letter-spacing:-0.472px;left:1185.0px;top:357px;">PH</span>
<span class="t" style="letter-spacing:0.032px;left:772.0px;top:384px;">Tiền tệ:</span>
<div class="in" style="left:863px;top:382px;width:232px;height:23px;"></div>
<span class="t" style="letter-spacing:-0.103px;left:865.8px;top:385px;">{47}Singapore Dollar (SGD)</span>
<svg style="left:1080.8px;top:391px" width="10" height="6" viewBox="0 0 10 6"><path d="M.6 .6L5 5 9.400 .6" fill="none" stroke="#444" stroke-width="1.100"/></svg>
<span class="t" style="letter-spacing:-0.152px;left:1115.9px;top:387px;">State:</span>
<div style="left:1182px;top:384px;width:51px;height:23px;background:#fff;border:1px solid #7a7a7a;"></div>
<span class="t" style="letter-spacing:-0.516px;left:1185.0px;top:387px;">AK</span>
<span class="t" style="letter-spacing:0.098px;left:772.0px;top:414px;">Địa chỉ:</span>
<div style="left:863px;top:414px;width:125px;height:23px;background:#fff;border:1px solid #7a7a7a;"></div>
<span class="t" style="letter-spacing:-0.288px;left:866.0px;top:417px;">312 Fayette St</span>
<span class="t" style="letter-spacing:-0.050px;left:996.5px;top:417px;">City:</span>
<div style="left:1034px;top:412px;width:61px;height:23px;background:#fff;border:1px solid #7a7a7a;"></div>
<span class="t" style="letter-spacing:0.190px;left:1037.0px;top:415px;">Manlius</span>
<span class="t" style="letter-spacing:0.095px;left:1117.6px;top:415px;">Zip:</span>
<div style="left:1182px;top:414px;width:51px;height:23px;background:#fff;border:1px solid #7a7a7a;"></div>
<span class="t" style="letter-spacing:0.156px;left:1185.0px;top:417px;">94720</span>
<div style="left:367px;top:501px;width:877px;height:135px;border:1px solid #dcdcdc;"></div>
<div style="left:377px;top:500px;width:166px;height:3px;background:#fff;"></div>
<div style="left:563px;top:500px;width:109px;height:3px;background:#fff;"></div>
<div style="left:378px;top:493px;width:13px;height:13px;background:#fff;border:1px solid #333;"></div>
<span class="t" style="letter-spacing:-0.219px;left:396.8px;top:492px;">Sài Cookie Nhét Tài Khoản</span>
<span class="t" style="letter-spacing:-0.253px;left:567.9px;top:492px;">Số Lượng Cookie:0</span>
<div style="left:370px;top:512px;width:870px;height:121px;background:#fff;border-top:1px solid #a0a0a0;border-left:1px solid #a0a0a0;border-right:1px solid #e3e3e3;border-bottom:1px solid #e3e3e3;"></div>
<div style="left:371px;top:513px;width:868px;height:119px;border-top:1px solid #696969;border-left:1px solid #696969;"></div>
<div style="left:706px;top:657px;width:92px;height:29px;background:#3778e0;"></div>
<span class="t" style="letter-spacing:-0.317px;font-family:'DejaVu Sans', 'Liberation Sans', sans-serif;left:739.0px;top:664px;font-weight:700;color:#fff;-webkit-text-stroke:0;">Lưu</span>
<div style="left:808px;top:657px;width:92px;height:29px;background:#800000;"></div>
<span class="t" style="letter-spacing:-0.579px;font-family:'DejaVu Sans', 'Liberation Sans', sans-serif;left:836.4px;top:664px;font-weight:700;color:#fff;-webkit-text-stroke:0;">Đóng</span>
</body></html>
